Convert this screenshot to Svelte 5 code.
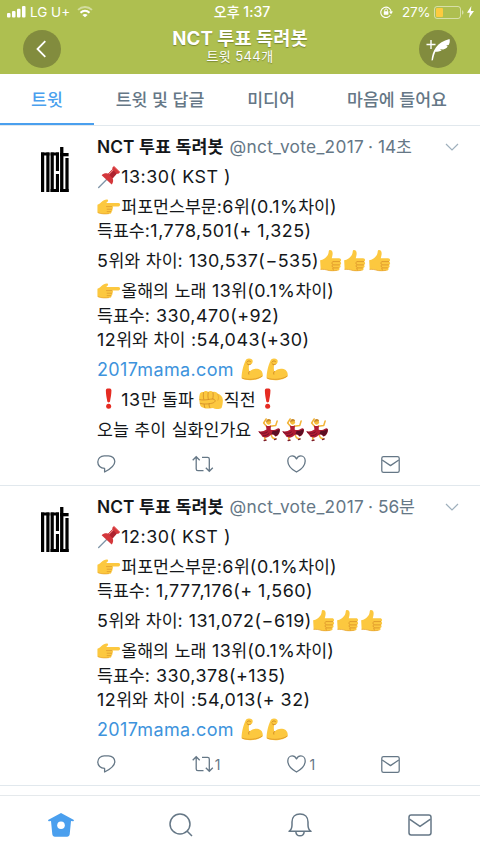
<script lang="ts">
    type Part = { text?: string, link?: string, emoji?: string, count?: number };

    const tabs = [
        { label: '트윗', width: 94 },
        { label: '트윗 및 답글', width: 132 },
        { label: '미디어', width: 90 },
        { label: '마음에 들어요', width: 162 }
    ];

    const tweets: { time: string, lines: Part[][], retweets: string, likes: string }[] = [
        {
            time: '14초',
            lines: [
                [{ emoji: 'pin' }, { text: '13:30( KST )' }],
                [{ emoji: 'point' }, { text: '퍼포먼스부문:6위(0.1%차이)' }],
                [{ text: '득표수:1,778,501(+ 1,325)' }],
                [{ text: '5위와 차이: 130,537(−535)' }, { emoji: 'thumb', count: 3 }],
                [{ emoji: 'point' }, { text: '올해의 노래 13위(0.1%차이)' }],
                [{ text: '득표수: 330,470(+92)' }],
                [{ text: '12위와 차이 :54,043(+30)' }],
                [{ link: '2017mama.com' }, { text: ' ' }, { emoji: 'arm', count: 2 }],
                [{ emoji: 'bang' }, { text: '13만 돌파 ' }, { emoji: 'fist' }, { text: '직전' }, { emoji: 'bang' }],
                [{ text: '오늘 추이 실화인가요 ' }, { emoji: 'dancer', count: 3 }]
            ],
            retweets: '',
            likes: ''
        },
        {
            time: '56분',
            lines: [
                [{ emoji: 'pin' }, { text: '12:30( KST )' }],
                [{ emoji: 'point' }, { text: '퍼포먼스부문:6위(0.1%차이)' }],
                [{ text: '득표수: 1,777,176(+ 1,560)' }],
                [{ text: '5위와 차이: 131,072(−619)' }, { emoji: 'thumb', count: 3 }],
                [{ emoji: 'point' }, { text: '올해의 노래 13위(0.1%차이)' }],
                [{ text: '득표수: 330,378(+135)' }],
                [{ text: '12위와 차이 :54,013(+ 32)' }],
                [{ link: '2017mama.com' }, { text: ' ' }, { emoji: 'arm', count: 2 }]
            ],
            retweets: '1',
            likes: '1'
        }
    ];

    let activeTab = $state(0);

    function hasEmoji(line: Part[]) {
        return line.some((part) => part.emoji);
    }

    // Hangul keeps its own spacing, digits and latin are set a little wider
    function runs(text: string) {
        return text.match(/[가-힣]+|[^가-힣]+/g) ?? [];
    }

    function isHangul(run: string) {
        return /^[가-힣]/.test(run);
    }
</script>

{#snippet emoji(name: string)}
    <svg class="emoji" viewBox="0 0 24 24" aria-hidden="true">
        {#if name === 'pin'}
            <path d="M11 13L1.5 22.5" stroke="#7f95a8" stroke-width="1.3" stroke-linecap="round" />
            <path d="M4.5 10.2c2-2 4.500-2.300 6.500-1.500l4.300-4.400c-.5-1.300.2-2.500 1.500-3l6 5.700c-.5 1.500-2 2.200-3.300 1.700l-4 4.500c1 2.300.5 4.600-1 6.300z" fill="#d4373b" />
            <path d="M11 8.700l4.300-4.400 4.200 4.400-4 4.500z" fill="#ae2330" />
            <path d="M12 8.900l3.700-3.800" stroke="#f18583" stroke-width="1.200" stroke-linecap="round" />
            <path d="M17 1.500l5.600 5.500" stroke="#ee7777" stroke-width="1" stroke-linecap="round" />
        {:else if name === 'point'}
            <path d="M.3 9.700c1.500-.3 2.500-1.200 4-2.600 1.800-1.800 3.400-2.700 5.700-2.600 1.200 0 1.300 1.600.3 2.300l-1.200 1.200h12.200c2.200 0 2.200 3.400 0 3.400h-6.100c.9.800.9 2.100-.1 2.600.5 1 .2 2-.8 2.400.3 1.400-.6 2.300-2 2.400-3.900.4-8.600.3-12-1z" fill="#fcc83f" />
            <path d="M9.300 11.600h5.500M10 14.200h4.600M10 16.600h3.800" stroke="#db942a" stroke-width=".7" stroke-linecap="round" fill="none" />
            <path d="M.8 17.700c3.300 1.400 8 1.400 11 .9" stroke="#e5a12d" stroke-width=".7" fill="none" />
        {:else if name === 'thumb'}
            <path d="M1 11.300c3.200-.6 5.200-2 7.100-4.500 1.200-1.600 1.300-2.900 1.500-4.600.2-1.800 3.400-1.500 3.800 1.200.3 1.800-.2 3.700-.8 5.800h7.300c2.300 0 2.700 2.800 1 3.400 1.500.6 1.400 2.800-.1 3.300 1.100.7.900 2.600-.7 3 .8 1 .2 2.500-1.300 2.700-3.500.5-7.900.6-10.300-.3-1.400-.6-3.600-.7-7-.7z" fill="#fcc83f" />
            <path d="M14 12.600h6.500M14.300 15.900h6M14.300 18.900h5M13.500 12.700c-1 .8-1 2.300.2 2.900-1 .8-.9 2.400.3 3-.7.800-.5 2 .4 2.600" stroke="#d99028" stroke-width=".8" stroke-linecap="round" fill="none" />
            <path d="M1.300 20.300c3 0 5.300.2 7 .9 2.800.8 7 .6 10 .1" stroke="#e5a12d" stroke-width=".7" fill="none" />
        {:else if name === 'arm'}
            <path d="M1.400 20.300C1.500 13.500 3.400 7 5.300 2.800 6 1.100 7.400.4 9 .5c2.300.1 3.900 1.200 3.500 3.200-.3 1.800-1.500 3.200-3.500 3.100-.5 2.500-.4 4.700.2 6.700 2.600-2.400 6-3.500 9.200-2.400 3.300 1 4.600 4.100 4.200 7.200-3.700 4-15.200 5.500-21.200 2z" fill="#fcc83f" />
            <path d="M6.800 4.100c.7-1.300 2.400-1.600 3.500-.6M7 5.800c1 .9 2.200 1.100 3.200.6M9.200 13.500c-.7.800-.9 1.700-.6 2.600" stroke="#c98222" stroke-width=".9" stroke-linecap="round" fill="none" />
            <path d="M2 20.100c6 2.300 15.500 1.300 20-2" stroke="#e09a29" stroke-width=".9" fill="none" />
        {:else if name === 'bang'}
            <path d="M8.700 2.300c0-1.400 1.200-1.800 2.800-1.800s2.800.4 2.800 1.800c0 4-.9 8-1.400 11-.2 1.500-2.600 1.500-2.800 0-.5-3-1.400-7-1.400-11z" fill="#e52b22" />
            <circle cx="11.500" cy="18.300" r="2.500" fill="#e52b22" />
        {:else if name === 'fist'}
            <path d="M.5 6.800C.7 4.600 2.600 3.700 4.400 4.200c1-1.500 3.500-1.600 4.600-.3 1.300-1.300 3.800-1.200 4.800.2 1.800-.8 3.700 0 4.500 1.500C21.600 6.500 23.700 9 23.700 12c0 3.500-.5 5.500-1.300 8-2 1.600-6.600 1.300-8.400.1-2.800.7-8 .7-10.300-.7C1.500 19 .6 17 .8 15.200-.2 12.500-.2 9.200.5 6.800z" fill="#fcc83f" />
            <path d="M4.400 4.500c-.4 2.500-.3 4.600.2 6.700M9 4.300c-.4 2.500-.3 4.800.1 7M13.800 4.500c.4 2.200.3 4.300-.2 6.300M.7 11.600c2.700.7 5.500.3 8.200 0 3-.6 6.500-1.300 7 .8.400 2-2.500 3-5.600 3.300M.9 15.300c2.600.9 6.300.9 9.300.4M5 16.300c0 1.300.2 2.200.7 3.300M9.800 16.300c0 1.300.3 2.300.9 3.400" stroke="#d18a24" stroke-width=".8" stroke-linecap="round" fill="none" />
            <path d="M18.300 5.700c1.400 2.600 1.200 4.800.3 7" stroke="#e5a12d" stroke-width=".7" fill="none" />
        {:else if name === 'dancer'}
            <path d="M9.500 8.500L6.500 5 9 1M13 8.300l5.600-.8L20 3M10 17.500l-2.600 2.300.9 2.500M14 17l1.300 2.800 3 1.200" stroke="#f2b336" stroke-width="1.500" stroke-linecap="round" stroke-linejoin="round" fill="none" />
            <circle cx="11.500" cy="4.300" r="2.400" fill="#f6bd3c" />
            <path d="M9 4.300c-.2-2.400 1.300-3.700 3-3.300 1.900.4 2.300 2 1.400 2.500-1.500-.6-2.700-.2-4.400.8z" fill="#c98a2a" />
            <path d="M8.800 7.500c1.800.8 3.300.8 5 .1l-.3 4c2 1.100 4.600.2 7-1.100 1.500-.7 2.800.8 2.200 2.700-.7 3-2 4.800-4.600 5.200-1.600-2.500-3.600-2.300-5.200-.9-2.300 2.300-4.700 2.500-7.700 1.200-.7-1.500-2.500-2.800-4.200-5.700 2.200 1 5.700.4 8.300-1.500z" fill="#b01c33" />
            <path d="M15.500 12.800c2.500.4 4.500-.6 6.800-1.900.6 2.500-.9 6.500-4 7.300-1.300-2-2.800-2.300-4-1.900z" fill="#5c0f24" />
            <path d="M2 14.200c3 1.600 6 1.400 8.500-.5M5.700 17.600c2.700.4 4.500-.6 6.300-2.200" stroke="#6e1029" stroke-width=".9" fill="none" />
            <path d="M7 22.500l2-.3M17.300 21.600l1.800-.7" stroke="#7c1c2a" stroke-width="1.300" stroke-linecap="round" />
        {/if}
    </svg>
{/snippet}

{#snippet envelope(size: number, stroke: number)}
    <svg width={size} height={size} viewBox="0 0 24 24" fill="none" stroke="currentColor" stroke-width={stroke} stroke-linejoin="round">
        <rect x="1" y="2" width="22" height="20" rx="2.200" />
        <path d="M1.500 6.200L12 13.400l10.500-7.200" />
    </svg>
{/snippet}

<div class="app">
    <header>
        <div class="status">
            <div class="carrier">
                <svg width="19" height="12" viewBox="0 0 19 12" fill="#fff">
                    <rect x="0" y="7" width="3.500" height="4.500" rx="1" />
                    <rect x="5" y="5" width="3.500" height="6.500" rx="1" />
                    <rect x="10" y="2.700" width="3.500" height="8.800" rx="1" />
                    <rect x="15" y="0" width="3.500" height="11.500" rx="1" />
                </svg>
                <span>LG U+</span>
                <svg width="16" height="12" viewBox="0 0 16 12" fill="none" stroke="#fff">
                    <path d="M1 3.900c4-3.800 10-3.800 14 0" stroke-width="1.900" opacity=".45" />
                    <path d="M3.500 6.700c2.700-2.500 6.300-2.500 9 0" stroke-width="2" />
                    <path d="M8 11.300L5.400 8.900c1.500-1.300 3.700-1.300 5.200 0z" fill="#fff" stroke="none" />
                </svg>
            </div>
            <div class="clock">오후 1:37</div>
            <div class="power">
                <svg width="13" height="12" viewBox="0 0 13 12" fill="none" stroke="#fff">
                    <path d="M10.300 9.300A5.200 5.200 0 1 1 11.200 6" stroke-width="1.100" />
                    <path d="M9 5.500h4l-2 2.700z" fill="#fff" stroke="none" />
                    <rect x="3.800" y="5.300" width="4.600" height="3.500" rx=".5" fill="#fff" stroke="none" />
                    <path d="M4.700 5.500V4.300a1.400 1.400 0 0 1 2.800 0v1.200" stroke-width=".9" />
                </svg>
                <span>27%</span>
                <svg width="30" height="13" viewBox="0 0 30 13">
                    <rect x=".5" y=".5" width="26" height="12" rx="2.500" fill="none" stroke="#fff" opacity=".5" />
                    <rect x="2" y="2" width="7" height="9" rx="1" fill="#fdcb3f" />
                    <path d="M28 4.300c2 .7 2 3.700 0 4.400z" fill="#fff" opacity=".5" />
                </svg>
                <svg class="bolt" width="7" height="12" viewBox="0 0 7 12"><path d="M4.300 0L0 6.700h2.800L2 12l5-7H3.900z" fill="#fff" /></svg>
            </div>
        </div>
        <div class="bar">
            <button class="round" aria-label="뒤로">
                <svg width="38" height="38" viewBox="0 0 38 38" fill="none" stroke="#fff" stroke-width="1.800">
                    <path d="M22.300 11.200L14.500 19l7.800 7.800" />
                </svg>
            </button>
            <div class="title">
                <h1>NCT 투표 독려봇</h1>
                <p>트윗 544개</p>
            </div>
            <button class="round" aria-label="트윗 작성">
                <svg width="38" height="38" viewBox="0 0 38 38">
                    <path d="M7.500 14.500h9M12 10v9" stroke="#fff" stroke-width="1.400" />
                    <path d="M12.500 30.500c.7-9.500 5.500-18.400 18-21.400.6 2.200.2 4.200-.8 5.900l-2.500.5 1.500 1c-1.200 1.700-2.700 2.600-4.500 3l-3.300-.2 1.800 1.300c-2 1-4 1.200-6.300 1.200-1.200 2.600-1.900 5.300-2.500 8.500z" fill="#fff" />
                </svg>
            </button>
        </div>
    </header>

    <nav class="tabs">
        {#each tabs as tab, i}
            <button class:active={activeTab === i} style="width: {tab.width}px" onclick={() => activeTab = i}>{tab.label}</button>
        {/each}
    </nav>

    <main>
        {#each tweets as tweet}
            <article>
                <svg class="avatar" width="28" height="46" viewBox="0 0 28 46">
                    <rect x="0" y="5.500" width="3.200" height="39.500" />
                    <rect x="0" y="5.500" width="8.500" height="3" />
                    <rect x="5.300" y="5.500" width="3.200" height="39.500" />
                    <rect x="9.600" y="5.500" width="3.200" height="39.500" />
                    <rect x="9.600" y="5.500" width="8.400" height="3" />
                    <rect x="9.600" y="42" width="8.400" height="3" />
                    <rect x="14.900" y="5.500" width="3.100" height="18.500" />
                    <rect x="14.900" y="27" width="3.100" height="18" />
                    <rect x="19.100" y="0" width="3.300" height="45" />
                    <rect x="19.100" y="6" width="8.500" height="3.300" />
                    <rect x="19.100" y="42" width="8.500" height="3" />
                    <rect x="24.400" y="11" width="3.200" height="34" />
                </svg>
                <div class="body">
                    <div class="author">
                        <strong>NCT 투표 독려봇</strong>
                        <span class="handle">@nct_vote_2017</span>
                        <span class="time">· {tweet.time}</span>
                        <svg class="chevron" width="14" height="8" viewBox="0 0 14 8" fill="none" stroke="#9fb0bd" stroke-width="1.200"><path d="M1 1l6 6 6-6" /></svg>
                    </div>
                    {#each tweet.lines as line}
                        <div class="line" class:tall={hasEmoji(line)}>
                            {#each line as part}
                                {#if part.emoji}
                                    {#each { length: part.count ?? 1 } as _}
                                        {@render emoji(part.emoji)}
                                    {/each}
                                {:else if part.link}
                                    <a href="#mama">{part.link}</a>
                                {:else}
                                    {#each runs(part.text ?? '') as run}
                                        <span class:wide={!isHangul(run)}>{run}</span>
                                    {/each}
                                {/if}
                            {/each}
                        </div>
                    {/each}
                    <div class="actions">
                        <span>
                            <svg width="19" height="18" viewBox="0 0 19 18" fill="none" stroke="currentColor" stroke-width="1.300" stroke-linejoin="round">
                                <path d="M7.600 13.400C3.400 13.400.8 10.600.8 7.100.8 3.500 3.500.8 7.200.8h4.300c3.700 0 6.300 2.600 6.300 5.800 0 4.700-4.700 7.700-10.200 10.400z" />
                            </svg>
                        </span>
                        <span>
                            <svg width="22" height="18" viewBox="0 0 22 18" fill="none" stroke="currentColor" stroke-width="1.300">
                                <path d="M.7 5.200L4.200 1.700l3.500 3.500M4.200 2v12c0 1 .7 1.700 1.700 1.700h5.600M10 2.300h5.600c1 0 1.700.7 1.700 1.700v12M13.800 12.800l3.500 3.500 3.500-3.500" />
                            </svg>
                            {tweet.retweets}
                        </span>
                        <span class="like">
                            <svg width="19" height="18" viewBox="0 0 19 18" fill="none" stroke="currentColor" stroke-width="1.300" stroke-linejoin="round">
                                <path d="M9.500 17C5.300 14.700.8 10.500.8 5.900.8 3 2.700.9 5.200.9c1.900 0 3.400 1 4.300 3 .9-2 2.400-3 4.300-3 2.500 0 4.400 2.100 4.400 5 0 4.600-4.500 8.800-8.700 11.100z" />
                            </svg>
                            {tweet.likes}
                        </span>
                        <span>{@render envelope(19, 1.6)}</span>
                    </div>
                </div>
            </article>
        {/each}
    </main>

    <nav class="dock">
        <a href="#home" class="on" aria-label="홈">
            <svg width="26" height="24" viewBox="0 0 26 24" fill="currentColor">
                <path d="M13 0l12.500 6.800c.8.500.3 1.700-.6 1.500l-1.900-.3-1.300 13.200c-.2 1.600-1.200 2.500-2.600 2.500H6.900c-1.400 0-2.400-.9-2.600-2.500L3 8l-1.900.3C.2 8.500-.3 7.300.5 6.800z" />
                <circle cx="13" cy="12.200" r="3.800" fill="#fff" />
            </svg>
        </a>
        <a href="#search" aria-label="검색">
            <svg width="24" height="24" viewBox="0 0 24 24" fill="none" stroke="currentColor" stroke-width="1.500">
                <circle cx="11" cy="11" r="10" /><path d="M18 18l5 5" />
            </svg>
        </a>
        <a href="#alerts" aria-label="알림">
            <svg width="24" height="24" viewBox="0 0 24 24" fill="none" stroke="currentColor" stroke-width="1.500" stroke-linejoin="round">
                <path d="M1 18.300c2.300-1.400 3-3.500 3-6.300V9c0-5 3.300-8 8-8s8 3 8 8v3c0 2.800.7 4.900 3 6.300zM7.800 18.500c.2 2.700 1.900 4.300 4.200 4.300s4-1.600 4.200-4.300" />
            </svg>
        </a>
        <a href="#messages" aria-label="쪽지">{@render envelope(24, 1.5)}</a>
    </nav>
</div>

<style>
    :global(body) {
        background: #fff;
    }

    .app {
        width: 480px;
        height: 853px;
        display: flex;
        flex-direction: column;
        overflow: hidden;
        box-sizing: border-box;
        font-family: Inter, 'Noto Sans CJK KR', sans-serif;
        color: #14171a;
    }

    button {
        border: 0;
        padding: 0;
        background: none;
        font: inherit;
    }

    svg {
        display: block;
        flex: none;
    }

    header {
        height: 74px;
        background: #aebf50;
        color: #fff;
        flex: none;
    }

    .status {
        display: grid;
        grid-template-columns: 1fr auto 1fr;
        align-items: center;
        height: 24px;
        padding: 0 6px 0 7px;
        font-size: 13.5px;
        line-height: 24px;
    }

    .carrier,
    .power {
        display: flex;
        align-items: center;
    }

    .carrier span {
        margin: 0 7px 0 4px;
    }

    .clock {
        font-size: 14px;
        font-weight: 500;
        padding-left: 3px;
    }

    .power {
        justify-content: flex-end;
    }

    .power span {
        margin: 0 4px 0 9px;
        letter-spacing: -0.4px;
    }

    .bolt {
        margin-left: 3px;
    }

    .bar {
        display: flex;
        justify-content: space-between;
        align-items: flex-start;
        padding: 5px 23px 0;
    }

    .round {
        width: 38px;
        height: 38px;
        border-radius: 50%;
        background: #828c3e;
        margin-top: 1px;
    }

    .title {
        text-align: center;
        text-shadow: 0 1px 1px rgba(70, 80, 20, 0.5);
    }

    h1 {
        margin: 0;
        font-size: 18.7px;
        line-height: 19px;
        font-weight: 700;
    }

    .title p {
        margin: 0;
        font-size: 13px;
        line-height: 17px;
        letter-spacing: 0.4px;
    }

    .tabs {
        display: flex;
        flex: none;
        height: 51px;
        border-bottom: 1px solid #e1e8ed;
    }

    .tabs button {
        color: #657786;
        font-size: 17.3px;
        font-weight: 500;
        white-space: nowrap;
        border-bottom: 2px solid transparent;
    }

    .tabs button.active {
        color: #4a9fee;
        border-bottom-color: #4a9fee;
    }

    main {
        height: 669px;
        flex: none;
    }

    article {
        display: flex;
        padding: 9px 21px 10px 41px;
        border-bottom: 1px solid #e1e8ed;
    }

    .avatar {
        margin: 12px 28px 0 0;
    }

    .body {
        flex: 1;
        min-width: 0;
    }

    .author,
    .line {
        display: flex;
        align-items: center;
        height: 24.3px;
        font-size: 17.3px;
        line-height: 24.3px;
        white-space: pre;
    }

    .line.tall {
        padding-top: 5.7px;
    }

    .wide {
        font-size: 17.9px;
        letter-spacing: 0.5px;
    }

    strong {
        font-weight: 600;
        letter-spacing: 0.1px;
    }

    .handle,
    .time {
        color: #657786;
    }

    .handle {
        margin: 0 4px 0 6px;
        letter-spacing: 0.3px;
    }

    .chevron {
        margin-left: auto;
    }

    .emoji {
        width: 24.3px;
        height: 24px;
    }

    a {
        color: #3d93dc;
        text-decoration: none;
    }

    .line a {
        font-size: 18px;
        letter-spacing: 0.35px;
        margin-right: 1px;
    }

    .actions {
        display: flex;
        height: 22px;
        margin-top: 11px;
        color: #657786;
        font-size: 14px;
    }

    .actions span {
        display: flex;
        flex: none;
        align-items: center;
        width: 94.8px;
        gap: 1px;
    }

    .actions .like {
        gap: 4px;
    }

    .actions span:last-child {
        width: 19px;
    }

    .dock {
        display: flex;
        flex: 1;
        padding-left: 1px;
        border-top: 1px solid #e5e9ec;
    }

    .dock a {
        display: flex;
        flex: 1;
        align-items: center;
        justify-content: center;
        color: #657786;
    }

    .dock a.on {
        color: #4a9fee;
    }
</style>
